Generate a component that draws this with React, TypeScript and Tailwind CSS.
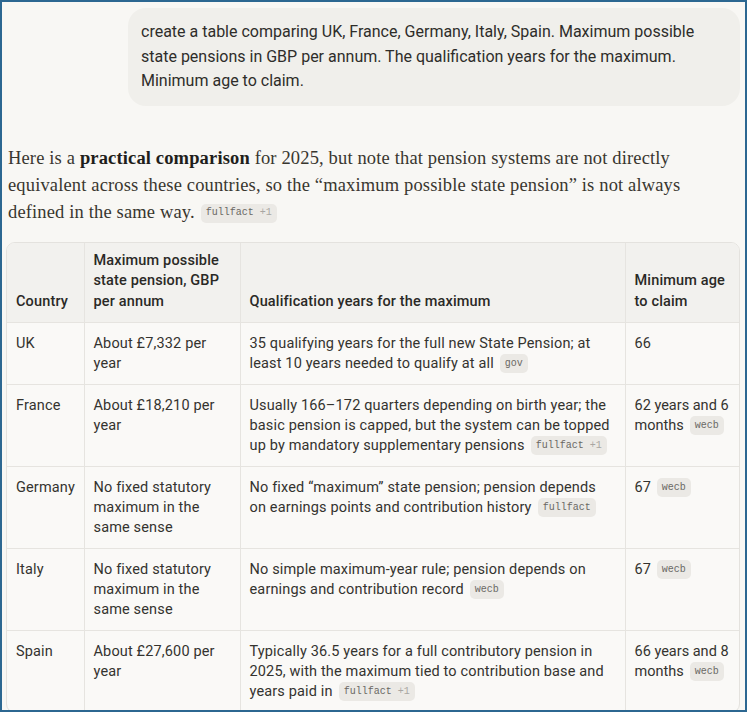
import React from "react";

const sans = { fontFamily: "Roboto, 'Liberation Sans', sans-serif" };

function Badge({ label, extra }: { label: string; extra?: string }) {
  return (
    <span
      className="my-[-4px] ml-[6px] inline-flex h-[19px] items-center rounded-[5px] bg-[#ebe9e5] px-[5px] align-middle text-[10px] leading-none tracking-normal text-[#6a6864]"
      style={{ fontFamily: "'Liberation Mono', monospace" }}
    >
      {label}
      {extra ? <span className="ml-[6px] text-[#a8a6a2]">{extra}</span> : null}
    </span>
  );
}

type Row = {
  country: string;
  max: React.ReactNode;
  years: React.ReactNode;
  age: React.ReactNode;
};

const rows: Row[] = [
  {
    country: "UK",
    max: "About £7,332 per year",
    years: (
      <>
        35 qualifying years for the full new State Pension; at least 10 years needed to qualify at all
        <Badge label="gov" />
      </>
    ),
    age: "66",
  },
  {
    country: "France",
    max: "About £18,210 per year",
    years: (
      <>
        Usually 166–172 quarters depending on birth year; the basic pension is capped, but the system can be topped up by mandatory supplementary pensions
        <Badge label="fullfact" extra="+1" />
      </>
    ),
    age: (
      <>
        62 years and 6 months
        <Badge label="wecb" />
      </>
    ),
  },
  {
    country: "Germany",
    max: "No fixed statutory maximum in the same sense",
    years: (
      <>
        No fixed “maximum” state pension; pension depends on earnings points and contribution history
        <Badge label="fullfact" />
      </>
    ),
    age: (
      <>
        67
        <Badge label="wecb" />
      </>
    ),
  },
  {
    country: "Italy",
    max: "No fixed statutory maximum in the same sense",
    years: (
      <>
        No simple maximum-year rule; pension depends on earnings and contribution record
        <Badge label="wecb" />
      </>
    ),
    age: (
      <>
        67
        <Badge label="wecb" />
      </>
    ),
  },
  {
    country: "Spain",
    max: "About £27,600 per year",
    years: (
      <>
        Typically 36.5 years for a full contributory pension in 2025, with the maximum tied to contribution base and years paid in
        <Badge label="fullfact" extra="+1" />
      </>
    ),
    age: (
      <>
        66 years and 8 months
        <Badge label="wecb" />
      </>
    ),
  },
];

export default function App() {
  return (
    <div className="h-[713px] w-[750px] bg-white">
      <div className="box-border h-[712px] w-[747px] overflow-hidden border-2 border-[#2c6791] bg-[#f8f7f4] pl-[4px] pr-[5px] pt-[6px]">
        <div className="flex justify-end">
          <div
            className="w-[612px] rounded-[18px] bg-[#f0efeb] px-[13px] py-[12px] text-[16px] leading-[24.5px] text-[#2e2d2a]"
            style={sans}
          >
            create a table comparing UK, France, Germany, Italy, Spain. Maximum possible state pensions in GBP per annum. The qualification years for the maximum. Minimum age to claim.
          </div>
        </div>

        <p
          className="mt-[39px] pl-[2px] text-[18.5px] leading-[27px] tracking-[0.15px] text-[#38362f]"
          style={{ fontFamily: "'Liberation Serif', serif" }}
        >
          Here is a <strong className="font-bold text-[#1f1e1b]">practical comparison</strong> for 2025, but note that pension systems are not directly equivalent across these countries, so the “maximum possible state pension” is not always defined in the same way.
          <Badge label="fullfact" extra="+1" />
        </p>

        <div className="mt-[16px] overflow-hidden rounded-[9px] border border-[#e4e2de] bg-[#faf9f7]" style={sans}>
          <table className="w-full table-fixed border-collapse text-[14.5px] leading-[20px] tracking-[0.15px] text-[#34332f]">
            <colgroup>
              <col className="w-[77px]" />
              <col className="w-[156px]" />
              <col className="w-[385px]" />
              <col />
            </colgroup>
            <thead>
              <tr className="bg-[#f2f1ee]">
                {[
                  "Country",
                  "Maximum possible state pension, GBP per annum",
                  "Qualification years for the maximum",
                  "Minimum age to claim",
                ].map((h, i) => (
                  <th
                    key={h}
                    className={`px-[9px] pb-[10px] pt-[8px] text-left align-bottom font-medium leading-[20.5px] text-[#2a2926] ${
                      i > 0 ? "border-l border-[#e6e4e0]" : ""
                    }`}
                  >
                    {h}
                  </th>
                ))}
              </tr>
            </thead>
            <tbody>
              {rows.map((r) => (
                <tr key={r.country} className="border-t border-[#e6e4e0]">
                  <td className="px-[9px] py-[10.5px] align-top">{r.country}</td>
                  <td className="border-l border-[#e6e4e0] px-[9px] py-[10.5px] align-top">{r.max}</td>
                  <td className="border-l border-[#e6e4e0] py-[10.5px] pl-[9px] pr-[12px] align-top">{r.years}</td>
                  <td className="border-l border-[#e6e4e0] py-[10.5px] pl-[9px] pr-[4px] align-top tracking-normal">{r.age}</td>
                </tr>
              ))}
            </tbody>
          </table>
        </div>
      </div>
    </div>
  );
}
